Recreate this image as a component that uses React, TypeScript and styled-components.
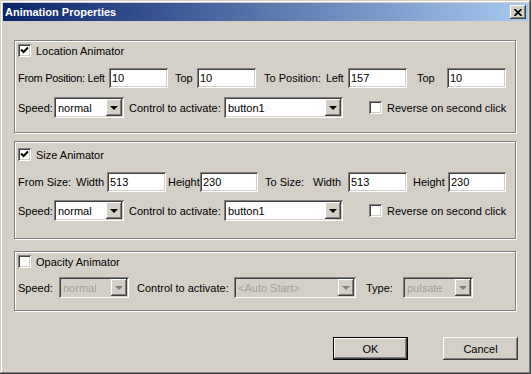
import React from 'react';
import styled, { createGlobalStyle } from 'styled-components';

const GlobalStyle = createGlobalStyle`
  html, body {
    margin: 0;
    padding: 0;
    background: #d4d0c8;
  }
  body {
    font-family: "Liberation Sans", Arial, sans-serif;
    font-size: 11px;
    color: #000;
  }
`;

const raised = `
  box-shadow: inset -1px -1px 0 #404040, inset 1px 1px 0 #fff,
    inset -2px -2px 0 #808080, inset 2px 2px 0 #d4d0c8;
`;

const sunken = `
  box-shadow: inset 1px 1px 0 #808080, inset -1px -1px 0 #fff,
    inset 2px 2px 0 #404040, inset -2px -2px 0 #d4d0c8;
`;

const Window = styled.div`
  width: 531px;
  height: 374px;
  box-sizing: border-box;
  padding: 3px;
  background: #d4d0c8;
  box-shadow: inset -1px -1px 0 #404040, inset 1px 1px 0 #d4d0c8,
    inset -2px -2px 0 #808080, inset 2px 2px 0 #fff;
  display: flex;
  flex-direction: column;
`;

const TitleBar = styled.div`
  height: 18px;
  flex-shrink: 0;
  display: flex;
  align-items: center;
  justify-content: space-between;
  padding: 0 2px;
  background: linear-gradient(to right, #0a246a, #a6caf0);
`;

const TitleText = styled.span`
  color: #fff;
  font-weight: bold;
  font-size: 11px;
`;

const CloseButton = styled.div`
  width: 16px;
  height: 14px;
  background: #d4d0c8;
  display: flex;
  align-items: center;
  justify-content: center;
  ${raised}
`;

const Body = styled.div`
  display: flex;
  flex-direction: column;
  padding: 19px 0 0 11px;
`;

const Group = styled.div<{ $pt: number; $pb: number; $mt: number }>`
  width: 502px;
  box-sizing: border-box;
  margin-top: ${(p) => p.$mt}px;
  padding: ${(p) => p.$pt}px 0 ${(p) => p.$pb}px 3px;
  border: 1px solid #808080;
  box-shadow: inset 1px 1px 0 #fff, 1px 1px 0 #fff;
  display: flex;
  flex-direction: column;
`;

const Row = styled.div<{ $mt?: number; $h: number }>`
  display: flex;
  align-items: center;
  height: ${(p) => p.$h}px;
  margin-top: ${(p) => p.$mt ?? 0}px;
  white-space: nowrap;
`;

const Label = styled.span<{ $w: number; $pl?: number; $ls?: number }>`
  box-sizing: border-box;
  width: ${(p) => p.$w}px;
  padding-left: ${(p) => p.$pl ?? 0}px;
  letter-spacing: ${(p) => p.$ls ?? 0}px;
  flex-shrink: 0;
`;

const Field = styled.div<{ $w: number }>`
  width: ${(p) => p.$w}px;
  height: 20px;
  box-sizing: border-box;
  padding: 0 3px;
  background: #fff;
  display: flex;
  align-items: center;
  flex-shrink: 0;
  ${sunken}
`;

const Select = styled.div<{ $w: number; $disabled?: boolean }>`
  width: ${(p) => p.$w}px;
  height: 21px;
  box-sizing: border-box;
  padding: 2px 2px 2px 4px;
  background: ${(p) => (p.$disabled ? '#d4d0c8' : '#fff')};
  color: ${(p) => (p.$disabled ? '#a0a0a0' : '#000')};
  display: flex;
  align-items: center;
  justify-content: space-between;
  flex-shrink: 0;
  ${sunken}
`;

const DropButton = styled.div`
  width: 16px;
  height: 17px;
  background: #d4d0c8;
  display: flex;
  align-items: center;
  justify-content: center;
  ${raised}
`;

const Arrow = styled.div<{ $disabled?: boolean }>`
  width: 0;
  height: 0;
  border-left: 4px solid transparent;
  border-right: 4px solid transparent;
  border-top: 4px solid ${(p) => (p.$disabled ? '#808080' : '#000')};
  margin-top: 1px;
`;

const Check = styled.label<{ $ml?: number }>`
  display: flex;
  align-items: center;
  gap: 5px;
  margin-left: ${(p) => p.$ml ?? 0}px;
`;

const Box = styled.div`
  width: 13px;
  height: 13px;
  box-sizing: border-box;
  background: #fff;
  display: flex;
  align-items: center;
  justify-content: center;
  ${sunken}
`;

const Footer = styled.div`
  display: flex;
  justify-content: flex-end;
  gap: 35px;
  margin: 26px 10px 0 0;
`;

const Button = styled.div<{ $default?: boolean }>`
  width: 75px;
  height: 23px;
  box-sizing: border-box;
  display: flex;
  align-items: center;
  justify-content: center;
  background: #d4d0c8;
  ${(p) =>
    p.$default
      ? `border: 1px solid #000;
         box-shadow: inset -1px -1px 0 #404040, inset 1px 1px 0 #fff,
           inset -2px -2px 0 #808080;`
      : raised}
`;

const CheckBox: React.FC<{ checked?: boolean; label: string; ml?: number }> = ({
  checked,
  label,
  ml,
}) => (
  <Check $ml={ml}>
    <Box>
      {checked && (
        <svg width="9" height="9" viewBox="0 0 9 9">
          <path d="M1 3.5 L3.5 6 L8 1.5" stroke="#000" strokeWidth="2" fill="none" />
        </svg>
      )}
    </Box>
    <span>{label}</span>
  </Check>
);

const Dropdown: React.FC<{ w: number; value: string; disabled?: boolean }> = ({
  w,
  value,
  disabled,
}) => (
  <Select $w={w} $disabled={disabled}>
    <span>{value}</span>
    <DropButton>
      <Arrow $disabled={disabled} />
    </DropButton>
  </Select>
);

const SpeedRow: React.FC<{ mt: number }> = ({ mt }) => (
  <Row $h={21} $mt={mt}>
    <Label $w={36}>Speed:</Label>
    <Dropdown w={70} value="normal" />
    <Label $w={100} $pl={5}>
      Control to activate:
    </Label>
    <Dropdown w={119} value="button1" />
    <CheckBox label="Reverse on second click" ml={26} />
  </Row>
);

const App: React.FC = () => {
  return (
    <>
      <GlobalStyle />
      <Window>
        <TitleBar>
          <TitleText>Animation Properties</TitleText>
          <CloseButton>
            <svg width="8" height="7" viewBox="0 0 8 7">
              <path d="M0.5 0 L7.5 7 M7.5 0 L0.5 7" stroke="#000" strokeWidth="1.6" />
            </svg>
          </CloseButton>
        </TitleBar>
        <Body>
          <Group $mt={0} $pt={3} $pb={14}>
            <Row $h={13}>
              <CheckBox checked label="Location Animator" />
            </Row>
            <Row $h={20} $mt={11}>
              <Label $w={91} $ls={-0.3}>
                From Position: Left
              </Label>
              <Field $w={59}>10</Field>
              <Label $w={29} $pl={7}>
                Top
              </Label>
              <Field $w={59}>10</Field>
              <Label $w={66} $pl={8}>
                To Position:
              </Label>
              <Label $w={26} $pl={4} $ls={-0.3}>
                Left
              </Label>
              <Field $w={59}>157</Field>
              <Label $w={40} $pl={10}>
                Top
              </Label>
              <Field $w={59}>10</Field>
            </Row>
            <SpeedRow mt={9} />
          </Group>

          <Group $mt={8} $pt={6} $pb={17}>
            <Row $h={13}>
              <CheckBox checked label="Size Animator" />
            </Row>
            <Row $h={20} $mt={11}>
              <Label $w={58}>From Size:</Label>
              <Label $w={31}>Width</Label>
              <Field $w={59}>513</Field>
              <Label $w={34} $pl={2}>
                Height
              </Label>
              <Field $w={58}>230</Field>
              <Label $w={55} $pl={7}>
                To Size:
              </Label>
              <Label $w={35}>Width</Label>
              <Field $w={59}>513</Field>
              <Label $w={41} $pl={6}>
                Height
              </Label>
              <Field $w={58}>230</Field>
            </Row>
            <SpeedRow mt={8} />
          </Group>

          <Group $mt={12} $pt={3} $pb={12}>
            <Row $h={13}>
              <CheckBox label="Opacity Animator" />
            </Row>
            <Row $h={21} $mt={9}>
              <Label $w={41}>Speed:</Label>
              <Dropdown w={70} value="normal" disabled />
              <Label $w={105} $pl={8}>
                Control to activate:
              </Label>
              <Dropdown w={122} value="<Auto Start>" disabled />
              <Label $w={47} $pl={10}>
                Type:
              </Label>
              <Dropdown w={70} value="pulsate" disabled />
            </Row>
          </Group>

          <Footer>
            <Button $default>OK</Button>
            <Button>Cancel</Button>
          </Footer>
        </Body>
      </Window>
    </>
  );
};

export default App;
